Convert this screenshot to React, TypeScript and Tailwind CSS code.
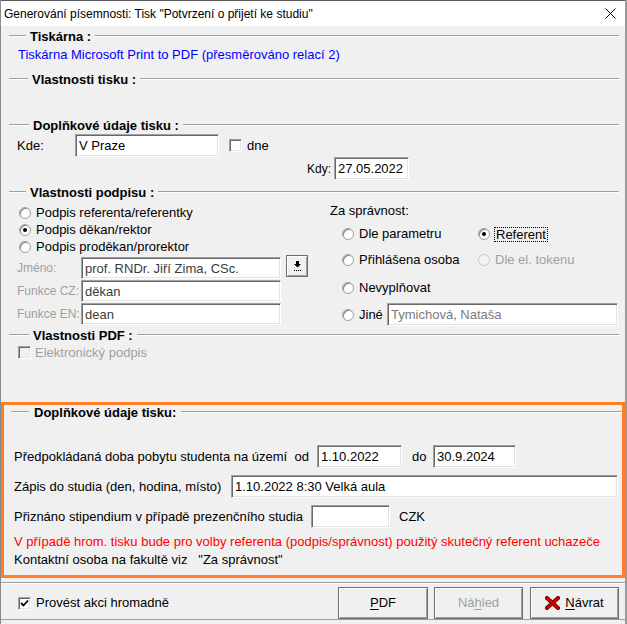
import React from "react"

const sunken =
  "border border-t-[#a0a0a0] border-l-[#a0a0a0] border-r-white border-b-white bg-white shadow-[inset_1px_1px_0_#696969,inset_-1px_-1px_0_#e3e3e3]"

const raised =
  "border border-[#6e6e6e] shadow-[inset_1px_1px_0_#ffffff,inset_-1px_-1px_0_#a0a0a0] bg-[#f0f0f0]"

const GroupHeader = ({ title, lead, className }: { title: string; lead: string; className: string }) => (
  <div className={`flex items-center pl-[8px] pr-[6px] ${className}`}>
    <div className={`h-[2px] border-t border-[#a0a0a0] border-b border-b-white ${lead}`} />
    <span className="px-[4px] text-[13px] font-bold leading-none text-black">{title}</span>
    <div className="h-[2px] flex-1 border-t border-[#a0a0a0] border-b border-b-white" />
  </div>
)

const Radio = ({ checked, disabled }: { checked?: boolean; disabled?: boolean }) => (
  <span
    className={`flex h-[12px] w-[12px] shrink-0 items-center justify-center rounded-full border ${
      disabled ? "border-[#c8c8c8] bg-[#f4f4f4]" : "border-[#a0a0a0] bg-white shadow-[inset_1px_1px_0_#8a8a8a]"
    }`}
  >
    {checked && <span className="h-[4px] w-[4px] rounded-full bg-black" />}
  </span>
)

const Checkbox = ({ checked, disabled }: { checked?: boolean; disabled?: boolean }) => (
  <span
    className={`flex h-[13px] w-[13px] shrink-0 items-center justify-center border border-t-[#a0a0a0] border-l-[#a0a0a0] border-r-white border-b-white shadow-[inset_1px_1px_0_#696969,inset_-1px_-1px_0_#e3e3e3] ${
      disabled ? "bg-[#f0f0f0]" : "bg-white"
    }`}
  >
    {checked && (
      <svg width="9" height="9" viewBox="0 0 9 9">
        <path d="M1 4 L3.5 6.5 L8 1.5" stroke="#000" strokeWidth="1.8" fill="none" />
      </svg>
    )}
  </span>
)

const Field = ({ value, className, textClass = "text-black" }: { value: string; className: string; textClass?: string }) => (
  <div className={`flex items-center whitespace-nowrap pl-[3px] text-[13px] leading-none ${sunken} ${className} ${textClass}`}>{value}</div>
)

const App = () => {
  return (
    <div className="flex h-[624px] w-[627px] flex-col overflow-hidden border-l border-r-2 border-l-[#8a8a8a] border-r-[#9a9a9a] bg-[#f0f0f0] font-['Liberation_Sans',Arial,sans-serif] text-[13px] text-black">
      {/* title bar */}
      <div className="flex h-[26px] shrink-0 items-center justify-between border-t border-[#5a5a5a] bg-white pl-[3px] pr-[9px]">
        <span className="text-[12px] leading-none">
          Generování písemnosti: Tisk "Potvrzení o přijetí ke studiu"
        </span>
        <svg width="11" height="11" viewBox="0 0 11 11">
          <path d="M0.5 0.5 L10.5 10.5 M10.5 0.5 L0.5 10.5" stroke="#000" strokeWidth="1" />
        </svg>
      </div>

      <GroupHeader title="Tiskárna :" lead="w-[17px]" className="h-[20px] shrink-0" />
      <div className="flex h-[18px] shrink-0 items-center pl-[17px] text-[#0000ff]">
        Tiskárna Microsoft Print to PDF (přesměrováno relací 2)
      </div>
      <GroupHeader title="Vlastnosti tisku :" lead="w-[19px]" className="h-[30px] shrink-0" />
      <div className="h-[22px] shrink-0" />
      <GroupHeader title="Doplňkové údaje tisku :" lead="w-[20px]" className="h-[18px] shrink-0" />

      {/* Kde */}
      <div className="flex h-[23px] shrink-0 items-center pl-[16px]">
        <span className="w-[58px]">Kde:</span>
        <Field value="V Praze" className="h-[23px] w-[144px]" />
        <span className="ml-[10px]">
          <Checkbox />
        </span>
        <span className="ml-[5px]">dne</span>
      </div>
      {/* Kdy */}
      <div className="flex h-[23px] shrink-0 items-center pl-[306px]">
        <span className="w-[27px] text-[12px]">Kdy:</span>
        <Field value="27.05.2022" className="h-[23px] w-[75px]" />
      </div>

      <GroupHeader title="Vlastnosti podpisu :" lead="w-[17px]" className="h-[24px] shrink-0" />

      {/* podpis + za správnost */}
      <div className="flex h-[122px] shrink-0">
        <div className="flex w-[329px] flex-col">
          <div className="flex h-[17px] items-center gap-[5px] pl-[18px]">
            <Radio />
            <span>Podpis referenta/referentky</span>
          </div>
          <div className="flex h-[17px] items-center gap-[5px] pl-[18px]">
            <Radio checked />
            <span>Podpis děkan/rektor</span>
          </div>
          <div className="flex h-[18px] items-center gap-[5px] pl-[18px]">
            <Radio />
            <span>Podpis proděkan/prorektor</span>
          </div>
          <div className="mt-[1px] flex h-[22px] items-center pl-[16px]">
            <span className="w-[64px] whitespace-nowrap text-[12px] text-[#a0a0a0]">Jméno:</span>
            <Field value="prof. RNDr. Jiří Zima, CSc." className="h-[22px] w-[200px]" textClass="text-[#3a3a3a]" />
            <button className={`ml-[5px] flex h-[22px] w-[22px] -translate-y-[2px] items-center justify-center ${raised}`}>
              <svg width="9" height="12" viewBox="0 0 9 12">
                <path d="M3 1 H6 V4 H8 L4.5 7.5 L1 4 H3 Z" fill="#000" />
                <path d="M1 10.5 H8" stroke="#000" strokeWidth="1" strokeDasharray="1 1" />
              </svg>
            </button>
          </div>
          <div className="mt-[1px] flex h-[22px] items-center pl-[16px]">
            <span className="w-[64px] whitespace-nowrap text-[12px] text-[#a0a0a0]">Funkce CZ:</span>
            <Field value="děkan" className="h-[22px] w-[200px]" textClass="text-[#3a3a3a]" />
          </div>
          <div className="mt-[1px] flex h-[22px] items-center pl-[16px]">
            <span className="w-[64px] whitespace-nowrap text-[12px] text-[#a0a0a0]">Funkce EN:</span>
            <Field value="dean" className="h-[22px] w-[200px]" textClass="text-[#3a3a3a]" />
          </div>
        </div>

        <div className="flex flex-1 flex-col">
          <div className="flex h-[14px] items-center">Za správnost:</div>
          <div className="mt-[7px] flex h-[18px] items-center pl-[12px]">
            <div className="flex w-[136px] items-center gap-[5px]">
              <Radio />
              <span>Dle parametru</span>
            </div>
            <div className="flex items-center gap-[4px]">
              <Radio checked />
              <span className="border border-dotted border-black px-[1px] leading-[13px]">Referent</span>
            </div>
          </div>
          <div className="mt-[8px] flex h-[18px] items-center pl-[12px]">
            <div className="flex w-[136px] items-center gap-[5px]">
              <Radio />
              <span>Přihlášena osoba</span>
            </div>
            <div className="flex items-center gap-[5px] text-[#a0a0a0]">
              <Radio disabled />
              <span>Dle el. tokenu</span>
            </div>
          </div>
          <div className="mt-[10px] flex h-[18px] items-center gap-[5px] pl-[12px]">
            <Radio />
            <span>Nevyplňovat</span>
          </div>
          <div className="mt-[6px] flex h-[23px] items-center pl-[12px]">
            <Radio />
            <span className="ml-[5px] w-[28px]">Jiné</span>
            <Field value="Tymichová, Nataša" className="h-[23px] w-[231px]" textClass="text-[#7a7a7a]" />
          </div>
        </div>
      </div>

      <GroupHeader title="Vlastnosti PDF :" lead="w-[20px]" className="h-[18px] shrink-0" />
      <div className="flex h-[17px] shrink-0 items-center gap-[4px] pl-[17px] text-[#a0a0a0]">
        <Checkbox disabled />
        <span>Elektronický podpis</span>
      </div>
      <div className="h-[41px] shrink-0" />

      {/* doplňkové údaje - orange frame */}
      <div className="flex h-[176px] shrink-0 flex-col border-[3px] border-[#ff7f27]">
        <div className="flex h-[14px] items-center pl-[7px]">
          <div className="h-[2px] w-[18px] border-t border-[#a0a0a0] border-b border-b-white" />
          <span className="px-[5px] font-bold leading-none">Doplňkové údaje tisku:</span>
          <div className="h-[2px] flex-1 border-t border-[#a0a0a0] border-b border-b-white" />
        </div>
        <div className="mt-[26px] flex h-[23px] items-center pl-[10px]">
          <span className="w-[303px] whitespace-pre">Předpokládaná doba pobytu studenta na území  od</span>
          <Field value="1.10.2022" className="h-[23px] w-[85px]" />
          <span className="ml-[10px] w-[21px]">do</span>
          <Field value="30.9.2024" className="h-[23px] w-[83px]" />
        </div>
        <div className="mt-[7px] flex h-[23px] items-center pl-[10px]">
          <span className="w-[217px]">Zápis do studia (den, hodina, místo)</span>
          <Field value="1.10.2022 8:30 Velká aula" className="h-[23px] w-[387px]" />
        </div>
        <div className="mt-[7px] flex h-[23px] items-center pl-[10px]">
          <span className="w-[297px]">Přiznáno stipendium v případě prezenčního studia</span>
          <Field value="" className="h-[23px] w-[79px]" />
          <span className="ml-[9px]">CZK</span>
        </div>
        <div className="mt-[5px] flex h-[18px] items-center pl-[10px] text-[#ff0000]">
          V případě hrom. tisku bude pro volby referenta (podpis/správnost) použitý skutečný referent uchazeče
        </div>
        <div className="flex h-[18px] items-center whitespace-pre pl-[10px]">
          Kontaktní osoba na fakultě viz   "Za správnost"
        </div>
      </div>

      {/* separator */}
      <div className="h-[9px] shrink-0 pt-[4px]">
        <div className="h-[2px] border-t border-[#a0a0a0] border-b border-b-white" />
      </div>

      {/* bottom bar */}
      <div className="flex h-[32px] shrink-0 items-center pr-[6px]">
        <div className="flex flex-1 items-center gap-[5px] pl-[17px]">
          <Checkbox checked />
          <span>Provést akci hromadně</span>
        </div>
        <button className={`flex h-[32px] w-[90px] items-center justify-center ${raised}`}>
          <span>
            <span className="underline underline-offset-2">P</span>DF
          </span>
        </button>
        <button className={`ml-[6px] flex h-[32px] w-[89px] items-center justify-center text-[#a0a0a0] ${raised}`}>
          <span>
            Ná<span className="underline underline-offset-2">h</span>led
          </span>
        </button>
        <button className={`ml-[7px] flex h-[32px] w-[89px] items-center justify-center gap-[5px] ${raised}`}>
          <svg width="15" height="14" viewBox="0 0 15 14">
            <path d="M2 2 L13 12 M13 2 L2 12" stroke="#5a0000" strokeWidth="4" strokeLinecap="square" />
            <path d="M2 2 L13 12 M13 2 L2 12" stroke="#d40000" strokeWidth="2.4" strokeLinecap="square" />
          </svg>
          <span>
            <span className="underline underline-offset-2">N</span>ávrat
          </span>
        </button>
      </div>
      <div className="flex-1 border-t border-[#a0a0a0]" />
    </div>
  )
}

export default App
